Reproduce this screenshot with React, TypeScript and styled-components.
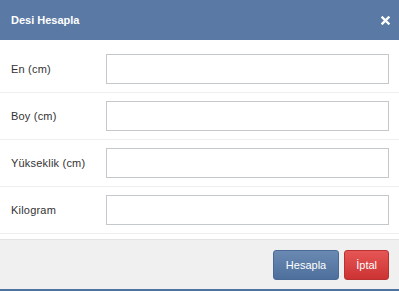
import React from 'react';
import styled, { createGlobalStyle } from 'styled-components';

const GlobalStyle = createGlobalStyle`
  html, body {
    margin: 0;
    padding: 0;
    background: #fff;
  }
  body {
    font-family: Arial, "Liberation Sans", sans-serif;
  }
`;

const Modal = styled.div`
  width: 399px;
  height: 291px;
  display: flex;
  flex-direction: column;
  background: #fff;
  border-bottom: 2px solid #4f73a0;
  box-sizing: border-box;
`;

const Header = styled.div`
  height: 40px;
  flex: none;
  background: #5a7aa5;
  display: flex;
  align-items: center;
  justify-content: space-between;
  padding: 0 9px 0 11px;
`;

const Title = styled.h4`
  margin: 0;
  color: #fff;
  font-size: 11px;
  font-weight: bold;
`;

const Close = styled.button`
  border: 0;
  background: none;
  padding: 0;
  width: 10px;
  height: 10px;
  display: flex;
  align-items: center;
  justify-content: center;
  cursor: pointer;
`;

const Body = styled.div`
  padding: 6px 0 5px;
  flex: none;
`;

const Row = styled.div`
  display: flex;
  align-items: center;
  padding: 8px 10px 8px 11px;
  height: 30px;
  border-bottom: 1px solid #eeeeee;
`;

const Label = styled.label`
  width: 95px;
  flex: none;
  font-size: 11px;
  letter-spacing: 0.2px;
  color: #333;
`;

const Input = styled.input`
  width: 283px;
  height: 30px;
  box-sizing: border-box;
  border: 1px solid #c4c8cc;
  outline: none;
  padding: 4px 8px;
  font-size: 11px;
`;

const Footer = styled.div`
  flex: 1;
  background: #f0f0f0;
  border-top: 1px solid #e2e2e2;
  display: flex;
  justify-content: flex-end;
  align-items: center;
  gap: 5px;
  padding: 0 10px 0 0;
`;

const Button = styled.button<{ $variant: 'primary' | 'danger' }>`
  height: 30px;
  padding: 0 ${p => (p.$variant === 'primary' ? '12px' : '11px')};
  border-radius: 3px;
  font-family: Arial, "Liberation Sans", sans-serif;
  font-size: 11px;
  color: #fff;
  cursor: pointer;
  border: 1px solid ${p => (p.$variant === 'primary' ? '#4a6a95' : '#b93232')};
  background: ${p =>
    p.$variant === 'primary'
      ? 'linear-gradient(#6a8ab3, #4d6f9b)'
      : 'linear-gradient(#e65656, #cc3232)'};
`;

const fields = ['En (cm)', 'Boy (cm)', 'Yükseklik (cm)', 'Kilogram'];

const CloseIcon = () => (
  <svg width="9" height="9" viewBox="0 0 9 9">
    <path d="M1.5 1.5 L7.5 7.5 M7.5 1.5 L1.5 7.5" stroke="#fff" strokeWidth="2.4" strokeLinecap="square" />
  </svg>
);

export default function App() {
  return (
    <>
      <GlobalStyle />
      <Modal>
        <Header>
          <Title>Desi Hesapla</Title>
          <Close aria-label="Kapat">
            <CloseIcon />
          </Close>
        </Header>
        <Body>
          {fields.map(f => (
            <Row key={f}>
              <Label>{f}</Label>
              <Input type="text" />
            </Row>
          ))}
        </Body>
        <Footer>
          <Button $variant="primary">Hesapla</Button>
          <Button $variant="danger">İptal</Button>
        </Footer>
      </Modal>
    </>
  );
}
